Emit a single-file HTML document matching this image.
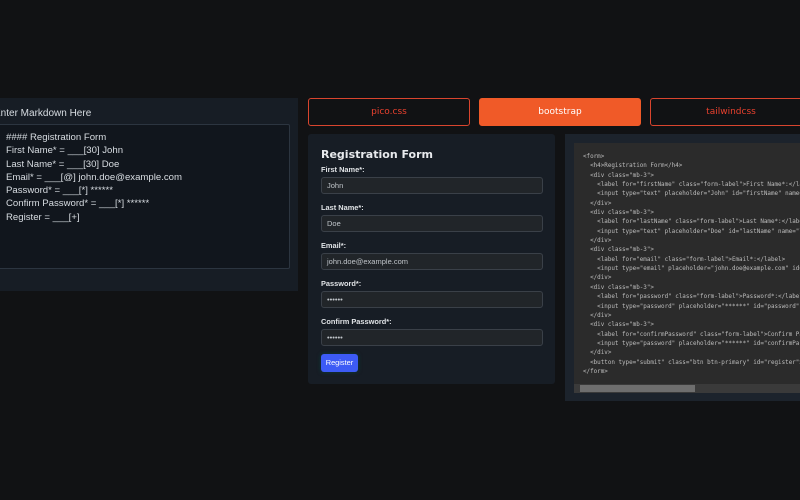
<!DOCTYPE html>
<html><head><style>
*{margin:0;padding:0;box-sizing:border-box}
body{width:800px;height:500px;background:#111214;overflow:hidden;position:relative;font-family:"DejaVu Sans","Liberation Sans",sans-serif;}
.abs{position:absolute}
#left{left:0;top:98px;width:298px;height:193px;background:#171d25;}
#left .lbl{position:absolute;left:-6px;top:10px;font-size:10px;color:#d8dde2;font-family:"Liberation Sans",sans-serif}
#left .ta{position:absolute;left:-4px;top:26px;width:294px;height:145px;background:#11161d;border:1px solid #2c3540;border-radius:2px;padding:6px 0 0 9px;font-family:"Liberation Sans",sans-serif;font-size:9.6px;line-height:13.3px;color:#d8dde2;white-space:pre}
.btn{position:absolute;top:98px;height:28px;width:162px;border:1px solid #d9452e;border-radius:3px;color:#e8412e;font-size:9px;text-align:center;line-height:26px;background:#111214}
.btn.on{background:#f05a28;border-color:#f05a28;color:#fff}
#form{left:308px;top:134px;width:247px;height:250px;background:#171d25;border-radius:3px}
#form h4{position:absolute;left:13px;top:14px;font-size:11px;font-weight:bold;color:#e8eaed}
.l{position:absolute;left:13px;font-size:7.4px;font-weight:bold;color:#e0e3e6;font-family:"Liberation Sans",sans-serif}
.i{position:absolute;left:13px;width:222px;height:17px;background:#212529;border:1px solid #3a4048;border-radius:3px;font-size:7.5px;color:#bfc4c9;padding-left:5px;line-height:15px;font-family:"Liberation Sans",sans-serif}
.rb{position:absolute;left:13px;top:220px;width:37px;height:18px;background:#3d5bf5;border-radius:3px;color:#fff;font-size:7.4px;line-height:18px;text-align:center;box-shadow:0 0 4px #0b3d3a;font-family:"Liberation Sans",sans-serif}
#code{left:565px;top:134px;width:240px;height:267px;background:#1c232c}
#pre{position:absolute;left:9px;top:9px;width:240px;height:250px;background:#2b2b2b;overflow:hidden}
#pre pre{position:absolute;left:9px;top:10px;font-family:"DejaVu Sans Mono","Liberation Mono",monospace;font-size:5.9px;line-height:9.35px;color:#bdbdbd}
#sb{position:absolute;left:0;top:241px;width:240px;height:9px;background:#3a3a3a}
#th{position:absolute;left:6px;top:242px;width:115px;height:7px;background:#6e6e6e}
</style></head><body>
<div id="left" class="abs"><div class="lbl">Enter Markdown Here</div><div class="ta">#### Registration Form
First Name* = ___[30] John
Last Name* = ___[30] Doe
Email* = ___[@] john.doe@example.com
Password* = ___[*] ******
Confirm Password* = ___[*] ******
Register = ___[+]</div></div>
<div class="btn" style="left:308px">pico.css</div>
<div class="btn on" style="left:479px">bootstrap</div>
<div class="btn" style="left:650px">tailwindcss</div>
<div id="form" class="abs">
<h4>Registration Form</h4>
<div class="l" style="top:31px">First Name*:</div><div class="i" style="top:43px">John</div>
<div class="l" style="top:69px">Last Name*:</div><div class="i" style="top:81px">Doe</div>
<div class="l" style="top:107px">Email*:</div><div class="i" style="top:119px">john.doe@example.com</div>
<div class="l" style="top:145px">Password*:</div><div class="i" style="top:157px">••••••</div>
<div class="l" style="top:183px">Confirm Password*:</div><div class="i" style="top:195px">••••••</div>
<div class="rb">Register</div>
</div>
<div id="code" class="abs"><div id="pre"><pre>&lt;form&gt;
  &lt;h4&gt;Registration Form&lt;/h4&gt;
  &lt;div class="mb-3"&gt;
    &lt;label for="firstName" class="form-label"&gt;First Name*:&lt;/label&gt;
    &lt;input type="text" placeholder="John" id="firstName" name="firstName"&gt;
  &lt;/div&gt;
  &lt;div class="mb-3"&gt;
    &lt;label for="lastName" class="form-label"&gt;Last Name*:&lt;/label&gt;
    &lt;input type="text" placeholder="Doe" id="lastName" name="lastName"&gt;
  &lt;/div&gt;
  &lt;div class="mb-3"&gt;
    &lt;label for="email" class="form-label"&gt;Email*:&lt;/label&gt;
    &lt;input type="email" placeholder="john.doe@example.com" id="email"&gt;
  &lt;/div&gt;
  &lt;div class="mb-3"&gt;
    &lt;label for="password" class="form-label"&gt;Password*:&lt;/label&gt;
    &lt;input type="password" placeholder="******" id="password" name="pw"&gt;
  &lt;/div&gt;
  &lt;div class="mb-3"&gt;
    &lt;label for="confirmPassword" class="form-label"&gt;Confirm Password*:&lt;/label&gt;
    &lt;input type="password" placeholder="******" id="confirmPassword"&gt;
  &lt;/div&gt;
  &lt;button type="submit" class="btn btn-primary" id="register"&gt;Register&lt;/button&gt;
&lt;/form&gt;</pre><div id="sb"></div><div id="th"></div></div></div>
</body></html>
